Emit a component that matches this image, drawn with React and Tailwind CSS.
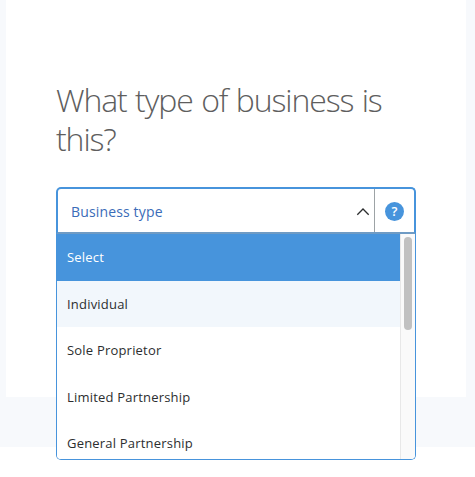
import { useState } from 'react';

const options = ['Select', 'Individual', 'Sole Proprietor', 'Limited Partnership', 'General Partnership'];

const rowStyles = {
  selected: 'bg-[#4794dc] text-white',
  hovered: 'bg-[#f2f7fc] text-[#2c2e2f]',
  idle: 'bg-white text-[#2c2e2f]',
};

export default function App() {
  const [selected, setSelected] = useState('Select');

  const rowState = (option) => {
    if (option === selected) return 'selected';
    return option === 'Individual' ? 'hovered' : 'idle';
  };

  return (
    <div className="h-[477px] w-[475px] overflow-hidden bg-white font-['Open_Sans',sans-serif]">
      <div className="h-[447px] bg-[#f7f9fc] pl-1.5 pr-[9px]">
        <div className="h-[397px] bg-white pl-[50px] pt-20">
          <h1 className="h-[107px] w-[350px] text-[32px] font-light leading-[39px] tracking-[-1.1px] text-[#5e5e5e] [word-spacing:1.2px]">
            What type of business is this?
          </h1>
          <div className="w-[360px]">
            <div className="flex h-[47px] rounded-t-[5px] border-2 border-[#4794dc] border-b-[#6f9bc4] bg-white">
              <button className="flex flex-1 items-center justify-between pl-[13px] pr-[3px] pt-0.5 text-sm tracking-[0.15px] text-[#3b6cb8]">
                Business type
                <svg className="h-4 w-4" viewBox="0 0 16 16" fill="none" stroke="#2c2e2f" strokeWidth="1.3">
                  <path d="M2.3 10.7 L8 5 L13.7 10.7" />
                </svg>
              </button>
              <div className="flex w-10 items-center justify-center border-l border-[#9da3a6] pt-0.5">
                <span className="flex h-[19px] w-[19px] items-center justify-center rounded-full bg-[#4794dc] text-[13px] font-semibold text-white">?</span>
              </div>
            </div>
            <div className="flex h-[226px] overflow-hidden rounded-b-[5px] border border-t-0 border-[#4794dc] bg-white">
              <ul className="flex-1">
                {options.map((option) => (
                  <li
                    key={option}
                    onClick={() => setSelected(option)}
                    className={`flex h-[46.5px] items-center pl-2.5 pt-px text-[13px] tracking-[0.2px] ${rowStyles[rowState(option)]}`}
                  >
                    {option}
                  </li>
                ))}
              </ul>
              <div className="w-[15px] border-l border-[#e8e8e8] bg-[#fafafa] pl-[3px] pt-[3px]">
                <div className="h-[93px] w-2 rounded-full bg-[#c1c1c1]" />
              </div>
            </div>
          </div>
        </div>
      </div>
    </div>
  );
}
